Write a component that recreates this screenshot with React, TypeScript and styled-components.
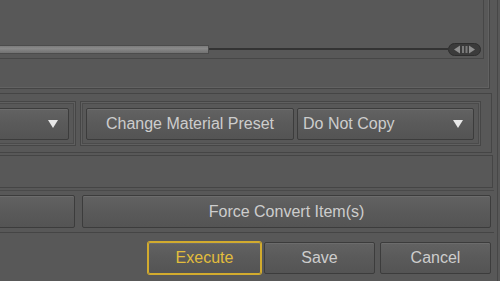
import styled, { createGlobalStyle } from 'styled-components';

const GlobalStyle = createGlobalStyle`
  html, body {
    margin: 0;
    padding: 0;
    background: #575757;
  }
  body {
    font-family: "Liberation Sans", Arial, sans-serif;
  }
`;

const Screen = styled.div`
  width: 500px;
  height: 281px;
  overflow: hidden;
  background: #585858;
`;

// the dialog runs past the left edge of the shot
const Dialog = styled.div`
  margin-left: -20px;
  width: 518px;
  height: 100%;
  box-sizing: border-box;
  display: flex;
  flex-direction: column;
  border-right: 1px solid #474747;
  padding-right: 3px;
`;

const ContentPanel = styled.div`
  height: 89px;
  margin-right: 4px;
  box-sizing: border-box;
  border-right: 1px solid #454545;
  border-bottom: 1px solid #454545;
  box-shadow: inset -1px -1px 0 #626262;
`;

const SliderBox = styled.div`
  height: 59px;
  margin-right: 5px;
  box-sizing: border-box;
  border-right: 1px solid #474747;
  border-bottom: 1px solid #474747;
  display: flex;
  align-items: flex-end;
  padding: 0 2px 3px 0;
`;

const SliderRow = styled.div`
  flex: 1;
  height: 12px;
  display: flex;
  align-items: center;
`;

const SliderFill = styled.div<{ $width: number }>`
  width: ${(p) => p.$width}px;
  height: 9px;
  box-sizing: border-box;
  background: linear-gradient(#7a7a7a, #8a8a8a 35%, #7e7e7e 65%, #727272);
  border-top: 1px solid #4c4c4c;
  border-bottom: 1px solid #4c4c4c;
  border-right: 1px solid #4c4c4c;
`;

const SliderGroove = styled.div`
  flex: 1;
  height: 2px;
  background: #333333;
`;

const Handle = styled.svg`
  width: 33px;
  height: 13px;
  flex-shrink: 0;
`;

const OptionsPanel = styled.div`
  margin-top: 4px;
  height: 60px;
  margin-right: 2px;
  box-sizing: border-box;
  border-top: 1px solid #454545;
  border-bottom: 1px solid #454545;
  border-right: 1px solid #454545;
  display: flex;
  gap: 4px;
  padding: 7px 10px 6px 0;
`;

const Group = styled.div<{ $width?: number }>`
  ${(p) => (p.$width ? `width: ${p.$width}px;` : 'flex: 1;')}
  box-sizing: border-box;
  border: 1px solid #464646;
  box-shadow: inset 0 0 0 1px #5f5f5f, inset 0 0 0 2px #4b4b4b;
  display: flex;
  align-items: center;
  gap: 3px;
  padding: 0 6px 0 5px;
`;

const Button = styled.button<{ $width?: number; $focus?: boolean; $height?: number }>`
  ${(p) => (p.$width ? `width: ${p.$width}px;` : 'flex: 1;')}
  height: ${(p) => p.$height ?? 32}px;
  box-sizing: border-box;
  margin: 0;
  padding: 0 8px;
  font-family: "Liberation Sans", Arial, sans-serif;
  font-size: 16px;
  color: ${(p) => (p.$focus ? '#e2bd3c' : '#cdcdcd')};
  background: linear-gradient(#626262, #5a5a5a 50%, #545454);
  border: 1px solid #3c3c3c;
  border-radius: 2px;
  box-shadow: inset 0 1px 0 #6c6c6c
    ${(p) => (p.$focus ? ', 0 0 0 1px #d2ab2e' : '')};
  ${(p) => (p.$focus ? 'border-color: #d2ab2e;' : '')}
  text-align: center;
  white-space: nowrap;
`;

const Select = styled(Button)`
  display: flex;
  align-items: center;
  justify-content: space-between;
  text-align: left;
  padding: 0 10px 0 5px;
`;

const Arrow = styled.span`
  width: 0;
  height: 0;
  border-left: 5px solid transparent;
  border-right: 5px solid transparent;
  border-top: 8px solid #e8e8e8;
`;

const EmptyPanel = styled.div`
  margin-top: 2px;
  height: 33px;
  margin-right: 1px;
  box-sizing: border-box;
  border-top: 1px solid #454545;
  border-bottom: 1px solid #454545;
  border-right: 1px solid #454545;
`;

const ActionRow = styled.div`
  margin-top: 2px;
  height: 43px;
  box-sizing: border-box;
  border-top: 1px solid #4a4a4a;
  border-bottom: 1px solid #454545;
  display: flex;
  align-items: center;
  gap: 7px;
  padding-right: 3px;
`;

const Footer = styled.div`
  margin-top: 9px;
  display: flex;
  justify-content: flex-end;
  padding-right: 3px;
`;

const FooterGap = styled.span<{ $size: number }>`
  width: ${(p) => p.$size}px;
`;

export default function App() {
  return (
    <Screen>
      <GlobalStyle />
      <Dialog>
        <ContentPanel>
          <SliderBox>
            <SliderRow>
              <SliderFill $width={229} />
              <SliderGroove />
              <Handle viewBox="0 0 33 13">
                <rect x="0.5" y="0.5" width="32" height="12" rx="6" fill="#3b3b3b" stroke="#2e2e2e" />
                <polygon points="6,6.5 12,2.5 12,10.5" fill="#8e8e8e" />
                <rect x="14" y="3" width="2" height="7" fill="#7a7a7a" />
                <rect x="17.5" y="3" width="2" height="7" fill="#7a7a7a" />
                <polygon points="27,6.5 21,2.5 21,10.5" fill="#8e8e8e" />
              </Handle>
            </SliderRow>
          </SliderBox>
        </ContentPanel>
        <OptionsPanel>
          <Group $width={96}>
            <Select as="div" $width={85}>
              <span />
              <Arrow />
            </Select>
          </Group>
          <Group>
            <Button $width={208}>Change Material Preset</Button>
            <Select as="div">
              <span>Do Not Copy</span>
              <Arrow />
            </Select>
          </Group>
        </OptionsPanel>
        <EmptyPanel />
        <ActionRow>
          <Button $width={95} $height={33} />
          <Button $height={33}>Force Convert Item(s)</Button>
        </ActionRow>
        <Footer>
          <Button $width={113} $focus>
            Execute
          </Button>
          <FooterGap $size={3} />
          <Button $width={111}>Save</Button>
          <FooterGap $size={5} />
          <Button $width={111}>Cancel</Button>
        </Footer>
      </Dialog>
    </Screen>
  );
}
